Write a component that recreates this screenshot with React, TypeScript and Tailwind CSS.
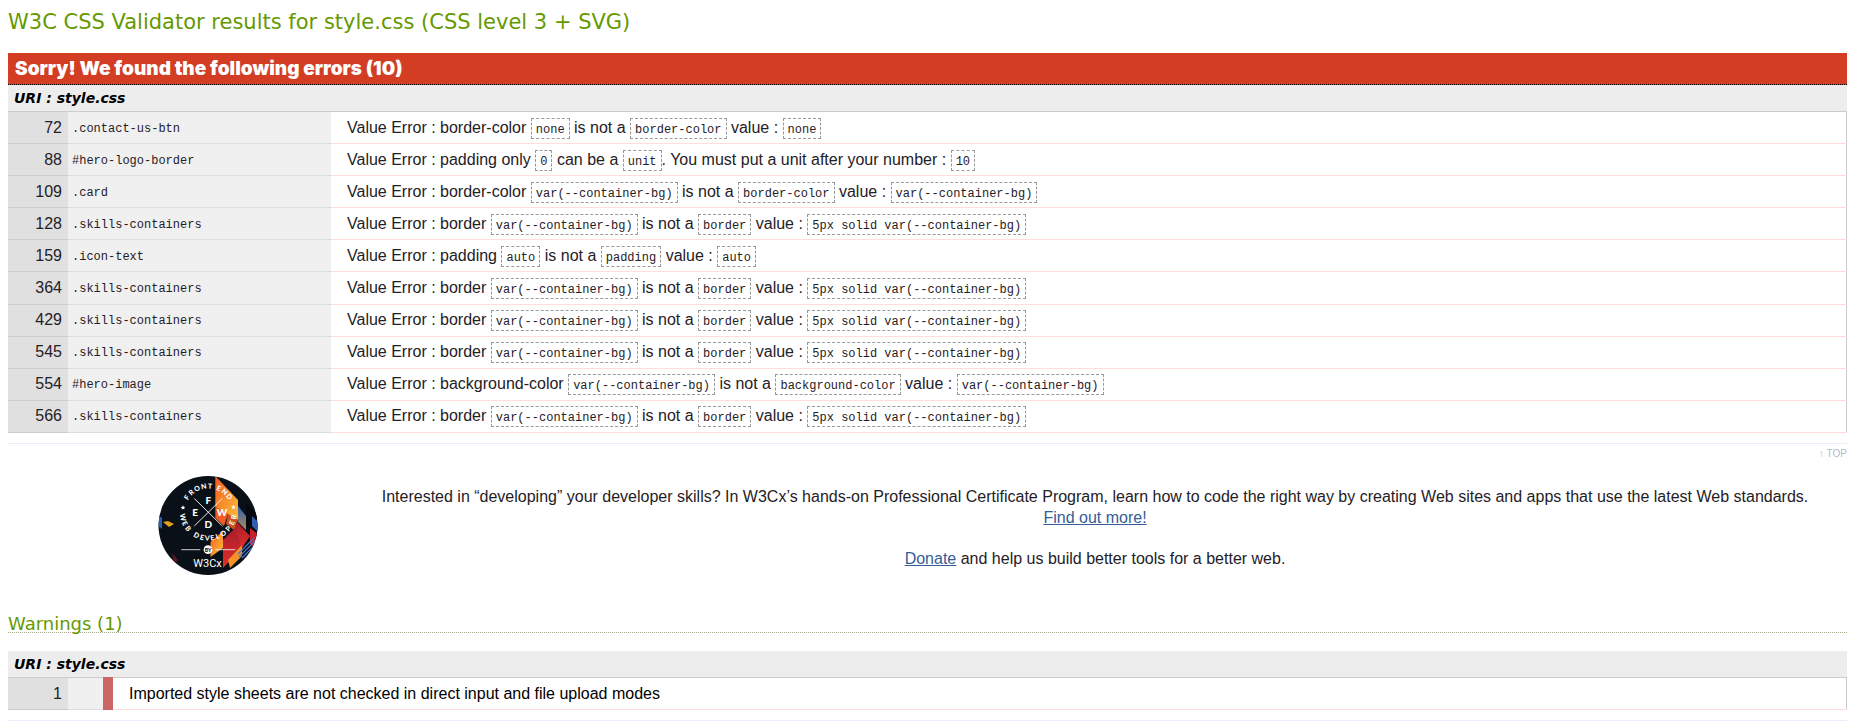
import type { ReactNode } from "react";

type Row = { line: number; context: string; message: string };

const badBorder = "Value Error : border `var(--container-bg)` is not a `border` value : `5px solid var(--container-bg)`";

const errors: Row[] = [
  { line: 72, context: ".contact-us-btn", message: "Value Error : border-color `none` is not a `border-color` value : `none`" },
  { line: 88, context: "#hero-logo-border", message: "Value Error : padding only `0` can be a `unit`. You must put a unit after your number : `10`" },
  { line: 109, context: ".card", message: "Value Error : border-color `var(--container-bg)` is not a `border-color` value : `var(--container-bg)`" },
  { line: 128, context: ".skills-containers", message: badBorder },
  { line: 159, context: ".icon-text", message: "Value Error : padding `auto` is not a `padding` value : `auto`" },
  { line: 364, context: ".skills-containers", message: badBorder },
  { line: 429, context: ".skills-containers", message: badBorder },
  { line: 545, context: ".skills-containers", message: badBorder },
  { line: 554, context: "#hero-image", message: "Value Error : background-color `var(--container-bg)` is not a `background-color` value : `var(--container-bg)`" },
  { line: 566, context: ".skills-containers", message: badBorder },
];

// Segments between backticks are drawn as code boxes.
function Message({ text }: { text: string }) {
  return (
    <>
      {text.split("`").map((part, i) =>
        i % 2 === 1 ? (
          <code key={i} className="border border-dashed border-[#999] px-1 pt-1 pb-px font-['Liberation_Mono',monospace] text-xs leading-none">
            {part}
          </code>
        ) : (
          <span key={i}>{part}</span>
        ),
      )}
    </>
  );
}

function UriHeading({ children }: { children: ReactNode }) {
  return (
    <h4 className="bg-[#ededed] px-[6px] font-['DejaVu_Sans',Verdana,sans-serif] text-sm leading-[26px] font-bold text-black italic">
      {children}
    </h4>
  );
}

// Letters of the badge ring: character, angle clockwise from the top, and
// whether it belongs to the lower half, where letters stand on the outer edge.
const ring: [string, number, boolean][] = [
  ["F", -56, false], ["R", -41, false], ["O", -26, false], ["N", -10, false], ["T", 4, false],
  ["E", 24, false], ["N", 39, false], ["D", 54, false],
  ["W", -102, true], ["E", -116, true], ["B", -129, true],
  ["D", -153, true], ["E", -166, true], ["V", -178, true], ["E", 171, true], ["L", 159, true],
  ["O", 145, true], ["P", 130, true], ["E", 115, true], ["R", 101, true],
];

function Badge() {
  return (
    <svg viewBox="0 0 100 100" className="size-25" role="img" aria-label="Front End Web Developer by W3Cx">
      <defs>
        <clipPath id="disc">
          <circle cx="50" cy="49.500" r="49.500" />
        </clipPath>
        <linearGradient id="flame" x1="0" y1="0" x2="1" y2="1">
          <stop offset="0" stopColor="#f15a22" />
          <stop offset="0.5" stopColor="#f7912a" />
          <stop offset="1" stopColor="#fdbc40" />
        </linearGradient>
        <linearGradient id="steel" x1="0" y1="0" x2="0" y2="1">
          <stop offset="0" stopColor="#2f5fae" />
          <stop offset="1" stopColor="#b08a5a" />
        </linearGradient>
        <linearGradient id="ember" x1="0" y1="0" x2="0" y2="1">
          <stop offset="0" stopColor="#a81d2b" />
          <stop offset="1" stopColor="#e02f2a" />
        </linearGradient>
      </defs>
      <g clipPath="url(#disc)">
        <rect width="100" height="100" fill="#0a1017" />
        <path d="M57.300 0 L80 24 V44 L57.300 31Z" fill="url(#flame)" />
        <path d="M57.300 31 L70 38 L66 50 L57.300 42Z" fill="#f15a22" />
        <path d="M70 38 L80 44 L76 54 L68 48Z" fill="#c9541f" />
        <path d="M80 30 L88 40 V54 L80 46Z" fill="url(#steel)" />
        <path d="M88 28 L100 38 V62 L88 48Z" fill="#05080d" />
        <path d="M94 40 L100 46 V56 L94 50Z" fill="#2f5fae" />
        <path d="M79 46 L92 60 L84 72 L74 60Z" fill="url(#ember)" />
        <path d="M92 52 L100 58 V74 L92 68Z" fill="#c6202c" />
        <path d="M52.500 66 L65 55 V72 L52.500 81Z" fill="url(#flame)" />
        <path d="M65 64 L77 52 L84 72 L65 92Z" fill="url(#ember)" />
        <path d="M70 84 L84 69 V80 L72 92Z" fill="#f7912a" />
        <path d="M80 78 L96 62 M81 81 L97 65 M84 82 L97 69" stroke="#4a78c8" strokeWidth="1.200" />
        <path d="M0 39 L4 42 V53 L0 50Z" fill="#2f5fae" />
        <path d="M5 46 L10 45 L16 48 L11 51Z" fill="#e0a020" />
        <path d="M14 77 L20 84 L16 88Z" fill="#5c1620" />
        <path d="M36.300 22.500 L64.300 50 M64.300 22.500 L36.300 50" stroke="#ffffff" strokeWidth="0.900" />
        <path d="M23.300 73.700 H42.300 M57.300 73.700 H77.300" stroke="#ffffff" strokeWidth="0.800" />
        <circle cx="50" cy="73.700" r="4.400" fill="#ffffff" />
        <g fill="#ffffff" fontFamily="Lato, sans-serif" fontWeight="900" textAnchor="middle">
          <text x="50.300" y="27.700" fontSize="10">F</text>
          <text x="37" y="40.300" fontSize="10">E</text>
          <text x="64" y="40.300" fontSize="10">W</text>
          <text x="50.300" y="52.300" fontSize="10">D</text>
          {ring.map(([char, angle, lower]) => (
            <text
              key={angle}
              fontSize="7"
              transform={
                lower
                  ? `rotate(${angle + 180} 50.3 36) translate(50.3 64.5)`
                  : `rotate(${angle} 50.3 36) translate(50.3 12.5)`
              }
            >
              {char}
            </text>
          ))}
          <path d="M25 29.200 l0.700 1.500 1.600 0.200 -1.200 1.100 0.300 1.600 -1.400 -0.800 -1.400 0.800 0.300 -1.600 -1.200 -1.100 1.600 -0.200z" />
          <path d="M75.500 28.700 l0.700 1.500 1.600 0.200 -1.200 1.100 0.300 1.600 -1.400 -0.800 -1.400 0.800 0.300 -1.600 -1.200 -1.100 1.600 -0.200z" />
          <text x="50" y="75.700" fontSize="5.200" fill="#0a1017">BY</text>
          <text x="49.500" y="91.300" fontSize="11" fontWeight="400" fontFamily="Roboto, sans-serif">W3Cx</text>
        </g>
      </g>
    </svg>
  );
}

function Rule() {
  return <hr className="mt-[10px] border-[#eaeaff]" />;
}

export default function App() {
  return (
    <main id="top" className="px-2 font-['Liberation_Sans',Arial,sans-serif] text-base text-[#1f2126]">
      <h2 className="pt-2 font-['DejaVu_Sans',Verdana,sans-serif] text-[21px] leading-7 text-[#690]">
        W3C CSS Validator results for style.css (CSS level 3 + SVG)
      </h2>

      <section>
        <h3 className="mt-[17px] border-b border-dotted border-black bg-[#d23d24] px-[7px] font-[Inter,'Arial_Black',sans-serif] text-[19px] leading-[31px] font-black text-white">
          Sorry! We found the following errors (10)
        </h3>
        <UriHeading>URI : style.css</UriHeading>
        <table className="h-[322px] w-full border-collapse border-t border-r border-[#ccc]">
          <tbody>
            {errors.map((e) => (
              <tr key={e.line}>
                <td className="w-[60px] border-b border-[#ccc] bg-[#e0e0e0] pr-[6px] text-right">{e.line}</td>
                <td className="w-[263px] border-b border-[#ddd] bg-[#f0f0f0] pt-[2px] pl-1 font-['Liberation_Mono',monospace] text-xs">{e.context}</td>
                <td className="border-b border-[#fdd] pl-4"><Message text={e.message} /></td>
              </tr>
            ))}
          </tbody>
        </table>
      </section>

      <Rule />
      <p className="text-right text-[10px] leading-5 text-[#b4b8c8]"><a href="#top">↑ TOP</a></p>

      <div className="flex items-start pt-3">
        <div className="w-[335px] shrink-0 pl-[150px]">
          <a href="#w3cx" className="block size-25"><Badge /></a>
        </div>
        <div className="flex flex-1 flex-col gap-5 pt-[10px] text-center leading-[21px]">
          <p>
            Interested in “developing” your developer skills? In W3Cx’s hands-on Professional Certificate Program, learn how to code the right way by creating Web sites and apps that use the latest Web standards.{" "}
            <br />
            <a href="#w3cx" className="text-[#365d95] underline">Find out more!</a>
          </p>
          <p>
            <a href="#donate" className="text-[#365d95] underline">Donate</a> and help us build better tools for a better web.
          </p>
        </div>
      </div>

      <section>
        <h3 className="mt-10 mb-[18px] border-b border-dotted border-[#aaa68c] font-['DejaVu_Sans',Verdana,sans-serif] text-lg leading-4 text-[#690]">
          Warnings (1)
        </h3>
        <UriHeading>URI : style.css</UriHeading>
        <table className="h-[33px] w-full border-collapse border-t border-r border-[#ccc]">
          <tbody>
            <tr>
              <td className="w-[60px] border-b border-[#ccc] bg-[#e0e0e0] pr-[6px] text-right">1</td>
              <td className="w-[35px] border-b border-[#ddd] bg-[#f0f0f0]" />
              <td className="w-[10px] border-y border-[#c66] bg-[#c66]" />
              <td className="border-b border-[#fdd] pl-4 text-black">Imported style sheets are not checked in direct input and file upload modes</td>
            </tr>
          </tbody>
        </table>
      </section>
      <Rule />
    </main>
  );
}
